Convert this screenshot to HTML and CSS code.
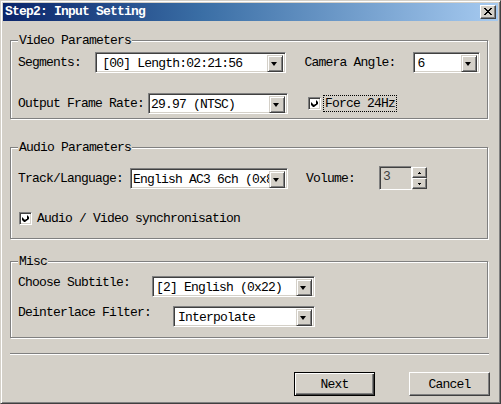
FILE: index.html
```html
<!DOCTYPE html>
<html>
<head>
<meta charset="utf-8">
<link rel="stylesheet" href="styles.css">
</head>
<body>
<div class="window">
  <div class="titlebar">
    <span class="title">Step2: Input Setting</span>
    <div class="close"><svg width="8" height="7" viewBox="0 0 8 7"><path d="M0 0h2v1h-2zM6 0h2v1h-2zM1 1h2v1h-2zM5 1h2v1h-2zM2 2h4v1h-4zM3 3h2v1h-2zM2 4h4v1h-4zM1 5h2v1h-2zM5 5h2v1h-2zM0 6h2v1h-2zM6 6h2v1h-2z" fill="#000"/></svg></div>
  </div>
  <div class="content">
    <div class="group g-video">
      <span class="legend">Video Parameters</span>
      <div class="row r1">
        <span class="label w-seg">Segments:</span>
        <div class="select s-seg"><span class="val pad6">[00] Length:02:21:56</span><span class="drop"></span></div>
        <span class="label w-cam">Camera Angle:</span>
        <div class="select s-cam"><span class="val pad4">6</span><span class="drop"></span></div>
      </div>
      <div class="row r2">
        <span class="label w-ofr">Output Frame Rate:</span>
        <div class="select s-ofr"><span class="val pad2">29.97 (NTSC)</span><span class="drop"></span></div>
        <span class="check c-force"><svg width="7" height="7" viewBox="0 0 7 7"><path d="M6 0v3l-1 1v-3zM0 2l1 1v3l-1-1zM1 3l1 1v3l-1-1zM2 4l1 1v2l-1 0zM3 5l4-4v3l-4 3z" fill="#000"/></svg></span>
        <span class="focus">Force 24Hz</span>
      </div>
    </div>

    <div class="group g-audio">
      <span class="legend">Audio Parameters</span>
      <div class="row r3">
        <span class="label w-track">Track/Language:</span>
        <div class="select s-track"><span class="val pad2">English AC3 6ch (0x80)</span><span class="drop"></span></div>
        <span class="label w-vol">Volume:</span>
        <div class="spin">
          <div class="spin-edit">3</div>
          <div class="spin-btns">
            <span class="sbtn"><svg width="3" height="2" viewBox="0 0 3 2"><path d="M1 0h1v1h1v1h-3v-1h1z" fill="#000"/></svg></span>
            <span class="sbtn"><svg width="3" height="2" viewBox="0 0 3 2"><path d="M0 0h3v1h-1v1h-1v-1h-1z" fill="#000"/></svg></span>
          </div>
        </div>
      </div>
      <div class="row r4">
        <span class="check"><svg width="7" height="7" viewBox="0 0 7 7"><path d="M6 0v3l-1 1v-3zM0 2l1 1v3l-1-1zM1 3l1 1v3l-1-1zM2 4l1 1v2l-1 0zM3 5l4-4v3l-4 3z" fill="#000"/></svg></span>
        <span class="cktext">Audio / Video synchronisation</span>
      </div>
    </div>

    <div class="group g-misc">
      <span class="legend">Misc</span>
      <div class="row r5">
        <span class="label w-sub">Choose Subtitle:</span>
        <div class="select s-sub"><span class="val pad3">[2] English (0x22)</span><span class="drop"></span></div>
      </div>
      <div class="row r6">
        <span class="label w-dei">Deinterlace Filter:</span>
        <div class="select s-dei"><span class="val pad4">Interpolate</span><span class="drop"></span></div>
      </div>
    </div>

    <div class="sep"></div>

    <div class="buttons">
      <div class="btn default">Next</div>
      <div class="btn">Cancel</div>
    </div>
  </div>
</div>
</body>
</html>
```

FILE: styles.css
```css
* { box-sizing: border-box; }
html, body { margin: 0; padding: 0; background: #d4d0c8; }
body {
  font-family: "Liberation Mono", "DejaVu Sans Mono", monospace;
  font-size: 13px;
  letter-spacing: -0.8px;
  color: #000;
}
.window {
  width: 501px;
  height: 404px;
  background: #d4d0c8;
  border: 1px solid;
  border-color: #d4d0c8 #404040 #404040 #d4d0c8;
  box-shadow: inset 1px 1px 0 #fff, inset -1px -1px 0 #808080;
  padding: 2px;
  display: flex;
  flex-direction: column;
}
.titlebar {
  height: 18px;
  background: linear-gradient(to right, #0a246a 0%, #3a6ea5 40%, #a6caf0 100%);
  display: flex;
  align-items: center;
  justify-content: space-between;
  padding: 0 2px 0 2px;
}
.title {
  color: #fff;
  font-weight: bold;
  line-height: 18px;
}
.close {
  width: 16px;
  height: 14px;
  background: #d4d0c8;
  border: 1px solid;
  border-color: #fff #404040 #404040 #fff;
  box-shadow: inset -1px -1px 0 #808080;
  display: flex;
  align-items: center;
  justify-content: center;
  padding: 0 1px 1px 0;
}
.close svg { display: block; }
.content {
  flex: 1;
  display: flex;
  flex-direction: column;
  padding: 19px 9px 0 7px;
}
.group {
  border: 1px solid #808080;
  box-shadow: inset 1px 1px 0 #fff, 1px 1px 0 #fff;
  padding: 0 7px;
  display: flex;
  flex-direction: column;
  margin-right: 1px;
}
.legend {
  align-self: flex-start;
  margin-top: -8px;
  background: #d4d0c8;
  padding: 0 1px;
  line-height: 15px;
  height: 15px;
}
.row {
  display: flex;
  align-items: center;
}
.label { white-space: nowrap; }
.select {
  height: 21px;
  background: #fff;
  border: 1px solid;
  border-color: #808080 #fff #fff #808080;
  box-shadow: inset 1px 1px 0 #404040, inset -1px -1px 0 #d4d0c8;
  padding: 2px;
  display: flex;
  align-items: stretch;
}
.val {
  flex: 1;
  overflow: hidden;
  white-space: nowrap;
  line-height: 17px;
}
.pad2 { padding-left: 0; }
.pad3 { padding-left: 1px; }
.pad4 { padding-left: 2px; }
.pad6 { padding-left: 4px; }
.drop {
  width: 16px;
  height: 17px;
  flex: none;
  background: #d4d0c8;
  border: 1px solid;
  border-color: #d4d0c8 #404040 #404040 #d4d0c8;
  box-shadow: inset 1px 1px 0 #fff, inset -1px -1px 0 #808080;
  position: relative;
}
.drop::after {
  content: "";
  position: absolute;
  left: 3px;
  top: 6px;
  border-left: 4px solid transparent;
  border-right: 3px solid transparent;
  border-top: 4px solid #000;
  width: 0;
  height: 0;
  border-left-width: 3.5px;
  border-right-width: 3.5px;
}
.check {
  width: 13px;
  height: 13px;
  flex: none;
  background: #fff;
  border: 1px solid;
  border-color: #808080 #fff #fff #808080;
  box-shadow: inset 1px 1px 0 #404040, inset -1px -1px 0 #d4d0c8;
  display: flex;
  align-items: center;
  justify-content: center;
}
.check svg { display: block; }
.focus {
  outline: 1px dotted #000;
  outline-offset: 0;
  padding: 0 1px;
  line-height: 15px;
}

/* Video group */
.g-video { margin-top: 0; padding-bottom: 4px; }
.r1 { margin-top: 4px; height: 21px; }
.w-seg { width: 78px; }
.s-seg { width: 192px; }
.w-cam { margin-left: 19px; width: 109px; }
.s-cam { width: 68px; }
.r2 { margin-top: 20px; height: 21px; }
.w-ofr { width: 130px; }
.s-ofr { width: 140px; }
.c-force { margin-left: 20px; margin-right: 3px; }

/* Audio group */
.g-audio { margin-top: 28px; padding-bottom: 13px; }
.r3 { margin-top: 11px; height: 24px; }
.w-track { width: 112px; }
.s-track { width: 158px; }
.w-vol { margin-left: 18px; width: 73px; }
.spin { display: flex; height: 24px; }
.spin-edit {
  width: 33px;
  height: 24px;
  border: 1px solid;
  border-color: #808080 #fff #fff #808080;
  box-shadow: inset 1px 1px 0 #404040, inset -1px -1px 0 #d4d0c8;
  padding: 2px 0 0 3px;
  line-height: 15px;
  color: #404040;
}
.spin-btns {
  display: flex;
  flex-direction: column;
  width: 15px;
  padding: 1px 0;
}
.sbtn {
  flex: 1;
  background: #d4d0c8;
  border: 1px solid;
  border-color: #fff #404040 #404040 #fff;
  box-shadow: inset -1px -1px 0 #808080;
  display: flex;
  align-items: center;
  justify-content: center;
}
.sbtn svg { display: block; }
.r4 { margin-top: 22px; height: 13px; }
.r4 .check { margin-left: 1px; }
.cktext { margin-left: 5px; }

/* Misc group */
.g-misc { margin-top: 22px; padding-bottom: 10px; }
.r5 { margin-top: 7px; height: 21px; }
.w-sub { width: 134px; align-self: flex-start; line-height: 14px; }
.s-sub { width: 163px; }
.r6 { margin-top: 9px; height: 21px; }
.w-dei { width: 155px; align-self: flex-start; line-height: 14px; }
.s-dei { width: 142px; }

.sep {
  margin-top: 15px;
  height: 2px;
  border-top: 1px solid #808080;
  border-bottom: 1px solid #fff;
  margin-right: 0;
}
.buttons {
  display: flex;
  justify-content: flex-end;
  margin-top: 17px;
  gap: 34px;
  margin-right: -1px;
}
.btn {
  width: 81px;
  height: 24px;
  background: #d4d0c8;
  border: 1px solid;
  border-color: #fff #404040 #404040 #fff;
  box-shadow: inset -1px -1px 0 #808080;
  display: flex;
  align-items: center;
  justify-content: center;
  line-height: 15px;
}
.btn.default {
  border: 1px solid #000;
  box-shadow: inset 1px 1px 0 #fff, inset -1px -1px 0 #404040, inset -2px -2px 0 #808080;
}
```
